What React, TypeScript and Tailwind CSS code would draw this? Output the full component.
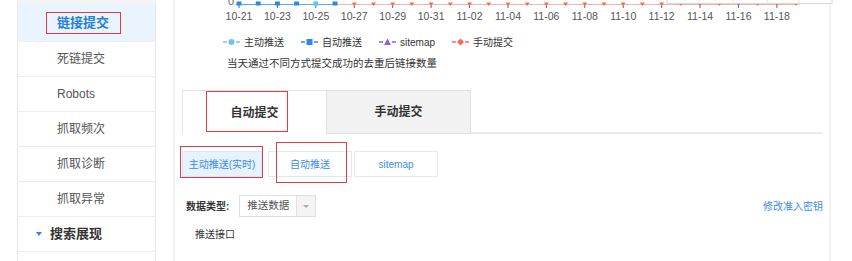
import React from "react";

const FONT = { fontFamily: '"Liberation Sans", "Noto Sans CJK SC", sans-serif' };

const sideItems = ["死链提交", "Robots", "抓取频次", "抓取诊断", "抓取异常"];

const dayX = (d: number) => 239 + 19.21 * d;
const dayLabel = (d: number) => (d <= 10 ? `10-${21 + d}` : `11-${String(d - 10).padStart(2, "0")}`);

const Chart: React.FC = () => {
  const days = Array.from({ length: 30 }, (_, i) => i);
  return (
    <svg width={654} height={22} viewBox="175 0 654 22" className="block overflow-visible">
      <text x={231} y={5} fontSize={11} fill="#666" textAnchor="middle" style={FONT}>
        0
      </text>
      <line x1={234} y1={4.5} x2={800} y2={4.5} stroke="#d8d8d8" />
      <line x1={dayX(0)} y1={4.5} x2={dayX(5)} y2={4.5} stroke="#5aa8f0" />
      <line x1={dayX(5)} y1={4.5} x2={dayX(29)} y2={4.5} stroke="#f6b3a8" />
      {days.map(d =>
        d % 2 === 0 ? <line key={"t" + d} x1={dayX(d)} y1={5} x2={dayX(d)} y2={8} stroke="#666" /> : null,
      )}
      {days.map(d => {
        const x = dayX(d);
        if (d === 4) return <circle key={d} cx={x} cy={3.5} r={2.6} fill="#6cc3f4" />;
        if (d <= 5) return <rect key={d} x={x - 2.5} y={1.5} width={5} height={4} fill="#2f86ea" />;
        if (d === 26) return <polygon key={d} points={`${x - 3},2 ${x + 3},2 ${x},6`} fill="#8a63d8" />;
        return <polygon key={d} points={`${x - 2.5},2.5 ${x + 2.5},2.5 ${x},6`} fill="#f46a5a" />;
      })}
      {days.map(d =>
        d % 2 === 0 ? (
          <text key={"l" + d} x={dayX(d)} y={19.5} fontSize={10.5} fill="#555" textAnchor="middle" style={FONT}>
            {dayLabel(d)}
          </text>
        ) : null,
      )}
      <rect x={667} y={-6} width={165} height={9.5} fill="#fff" stroke="#d6d6d6" />
      {[699, 733, 767, 799].map(x => (
        <line key={x} x1={x} y1={-6} x2={x} y2={3.5} stroke="#e2e2e2" />
      ))}
    </svg>
  );
};

const LegendIcon: React.FC<{ color: string; shape: "circle" | "square" | "triangle" | "diamond" }> = ({
  color,
  shape,
}) => (
  <svg width={17} height={8} viewBox="0 0 17 8">
    <line x1={0} y1={4} x2={4} y2={4} stroke={color} strokeWidth={1.5} />
    <line x1={13} y1={4} x2={17} y2={4} stroke={color} strokeWidth={1.5} />
    {shape === "circle" && <circle cx={8.5} cy={4} r={3} fill={color} />}
    {shape === "square" && <rect x={5.5} y={1} width={6} height={6} fill={color} />}
    {shape === "triangle" && <polygon points="8.5,0.5 12,7 5,7" fill={color} />}
    {shape === "diamond" && <polygon points="8.5,0.5 12,4 8.5,7.5 5,4" fill={color} />}
  </svg>
);

const legend = [
  { label: "主动推送", color: "#6cc3f4", shape: "circle" as const },
  { label: "自动推送", color: "#2f86ea", shape: "square" as const },
  { label: "sitemap", color: "#8a63d8", shape: "triangle" as const },
  { label: "手动提交", color: "#f46a5a", shape: "diamond" as const },
];

const RedBox: React.FC<{ className: string }> = ({ className }) => (
  <div className={"absolute border border-[#e53a3f] " + className} />
);

export default function App() {
  return (
    <div className="relative w-[852px] h-[261px] overflow-hidden bg-white flex" style={FONT}>
      {/* sidebar */}
      <div className="ml-[17px] w-[139px] shrink-0 border-x border-[#e8e8e8] border-t-[4px] border-t-[#f4f4f4] flex flex-col">
        <div className="h-[38px] bg-[#e9f4fe] border-b border-[#eeeeee] flex items-center pl-[39px] text-[13px] font-bold text-[#1f7fd8]">
          链接提交
        </div>
        {sideItems.map(item => (
          <div
            key={item}
            className="h-[35px] border-b border-[#eeeeee] flex items-center pl-[39px] text-[12px] text-[#555]"
          >
            {item}
          </div>
        ))}
        <div className="h-[35px] border-b border-[#eeeeee] flex items-center pl-[18px] text-[13px] font-bold text-[#333]">
          <span className="w-0 h-0 border-x-[3px] border-x-transparent border-t-[4px] border-t-[#2f86ea] mr-[8px]" />
          搜索展现
        </div>
      </div>

      {/* main panel */}
      <div className="ml-[17px] w-[658px] shrink-0 border-x-2 border-[#f2f2f2] flex flex-col">
        <Chart />

        <div className="mt-[14px] ml-[48px] h-[12px] flex items-center gap-[17px] text-[10px] text-[#333]">
          {legend.map(l => (
            <div key={l.label} className="flex items-center gap-[4px]">
              <LegendIcon color={l.color} shape={l.shape} />
              <span>{l.label}</span>
            </div>
          ))}
        </div>

        <div className="mt-[9px] ml-[52px] h-[12px] leading-[12px] text-[10.5px] text-[#333]">
          当天通过不同方式提交成功的去重后链接数量
        </div>

        <div className="mt-[21px] ml-[7px] mr-[6px] flex items-end h-[44px]">
          <div className="w-[144px] h-[44px] border-l border-t border-[#e6e6e6] bg-white flex items-center justify-center text-[12px] font-bold text-[#333]">
            自动提交
          </div>
          <div className="w-[145px] h-[44px] border border-[#e0e0e0] bg-[#f2f2f2] flex items-center justify-center text-[12px] font-bold text-[#333]">
            手动提交
          </div>
          <div className="flex-1 border-b-2 border-[#ebebeb]" />
        </div>

        <div className="mt-[17px] ml-[7px] flex h-[26px] text-[10px] text-[#3a8ee0]">
          <div className="w-[80px] border border-[#d3e6f7] bg-[#e6f3fe] flex items-center justify-center">
            主动推送(实时)
          </div>
          <div className="ml-[6px] w-[84px] border border-[#e8e8e8] bg-white flex items-center justify-center">
            自动推送
          </div>
          <div className="ml-[2px] w-[84px] border border-[#e8e8e8] bg-white flex items-center justify-center">
            sitemap
          </div>
        </div>

        <div className="mt-[18px] ml-[11px] mr-[6px] flex items-center h-[22px]">
          <span className="text-[10px] font-bold text-[#333]">数据类型:</span>
          <div className="ml-[10px] w-[77px] h-[22px] border border-[#e0e0e0] flex">
            <div className="flex-1 flex items-center justify-center text-[10.5px] text-[#555]">推送数据</div>
            <div className="w-[19px] border-l border-[#e0e0e0] bg-[#f4f4f4] flex items-center justify-center">
              <span className="w-0 h-0 border-x-[3px] border-x-transparent border-t-[3px] border-t-[#aaa]" />
            </div>
          </div>
          <span className="ml-auto text-[10px] text-[#3a8ee0]">修改准入密钥</span>
        </div>

        <div className="mt-[12px] ml-[20px] h-[12px] leading-[12px] text-[10px] text-[#333]">推送接口</div>
      </div>

      <RedBox className="left-[46px] top-[12px] w-[75px] h-[22px]" />
      <RedBox className="left-[206px] top-[91px] w-[82px] h-[41px]" />
      <RedBox className="left-[180px] top-[146px] w-[83px] h-[32px]" />
      <RedBox className="left-[276px] top-[142px] w-[71px] h-[41px]" />
    </div>
  );
}
